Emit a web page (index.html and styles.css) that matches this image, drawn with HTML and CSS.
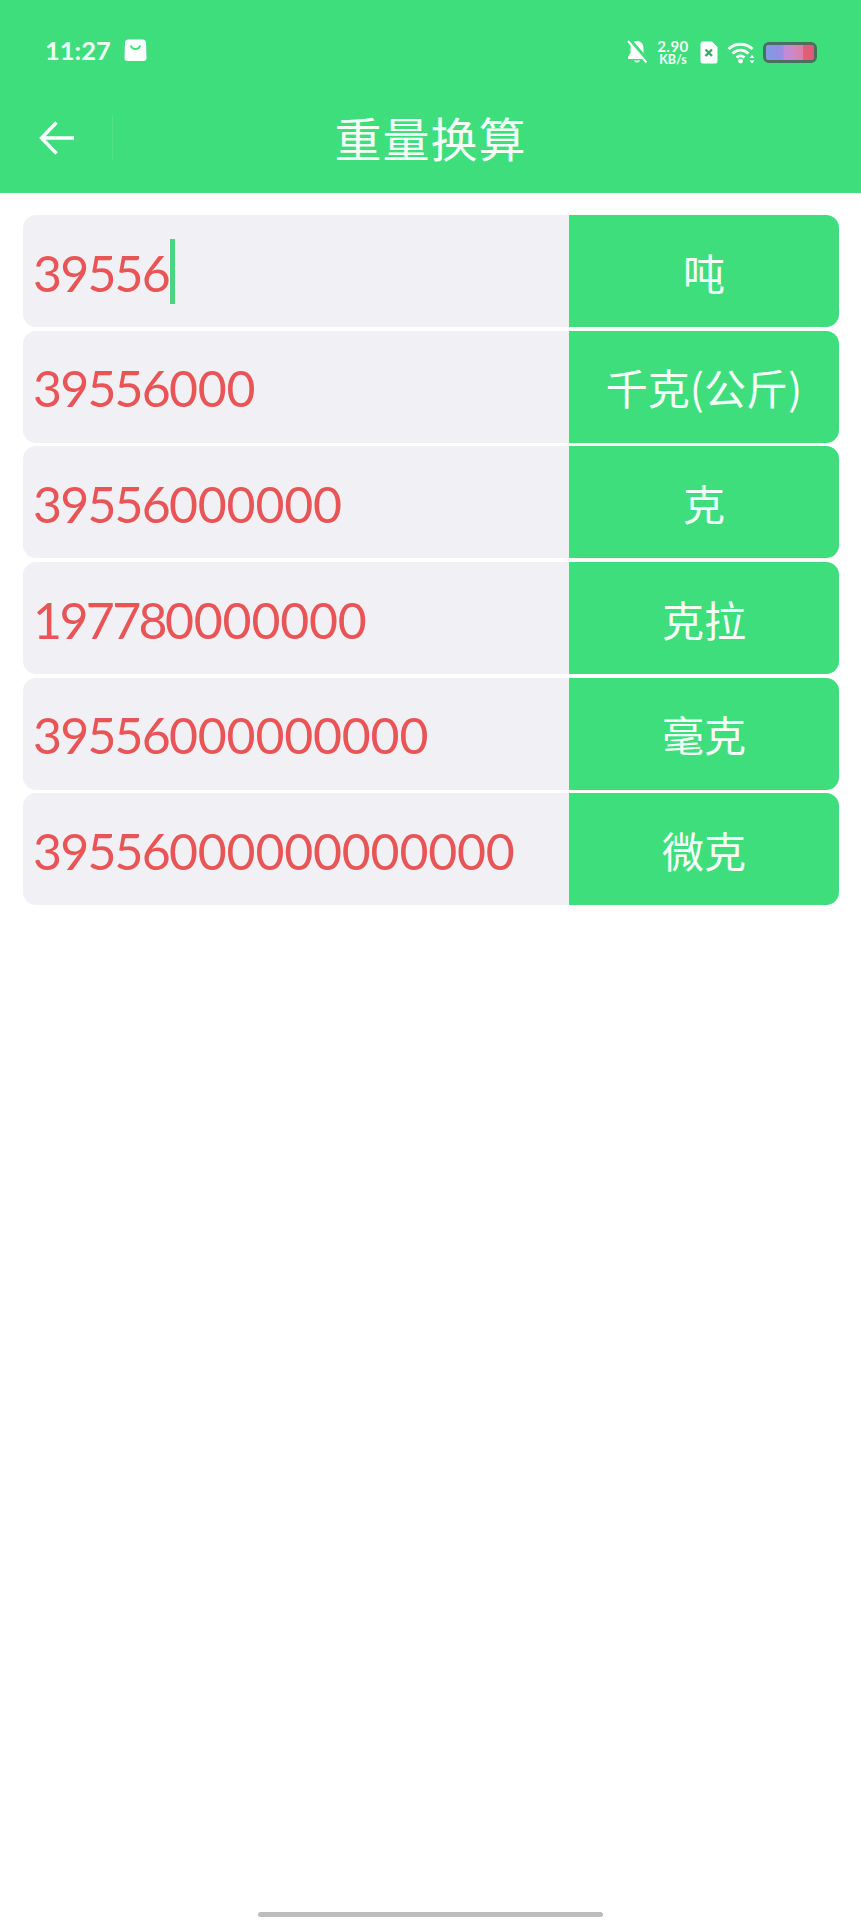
FILE: index.html
```html
<!DOCTYPE html>
<html lang="zh">
<head>
<meta charset="utf-8">
<title>重量换算</title>
<link rel="stylesheet" href="styles.css">
</head>
<body>
<header class="header">
  <div class="status">
    <div class="status-left">
      <span class="time">11:27</span>
      <svg class="bag" viewBox="0 0 23 23"><path d="M4 .5h15a3 3 0 0 1 3 2.500l.5 16a3 3 0 0 1-3 3h-16a3 3 0 0 1-3-3l.5-16a3 3 0 0 1 3-2.500z" fill="#fff"/><path d="M7 7c1 4 8 4 9 0" fill="none" stroke="#3fde7d" stroke-width="1.800" stroke-linecap="round"/></svg>
    </div>
    <div class="status-right">
      <svg class="bell" viewBox="0 0 22 24"><path d="M11 1c-4 0-6.500 3-6.500 7v5L2 17v2h18v-2L17.500 13V8c0-4-2.500-7-6.500-7z" fill="#fff"/><path d="M8 20.500c.5 2.500 5.500 2.500 6 0z" fill="#fff"/><path d="M3.500 0L22 21" stroke="#3fde7d" stroke-width="4"/><path d="M2 1L20.500 22.500" stroke="#fff" stroke-width="2"/></svg>
      <div class="speed"><span class="speed-num">2.90</span><span class="speed-unit">KB/s</span></div>
      <svg class="sim" viewBox="0 0 18 23"><path d="M3 .5h9L17.500 6v14a2.500 2.500 0 0 1-2.500 2.500H3A2.500 2.500 0 0 1 .5 20V3A2.500 2.500 0 0 1 3 .5z" fill="#fff"/><path d="M5.500 8.500l6.500 6.500M12 8.500L5.500 15" stroke="#3aa86a" stroke-width="2.400"/></svg>
      <svg class="wifi" viewBox="0 0 29 23"><path d="M1.500 8C8.500 1.500 18.500 1.500 25.500 8" fill="none" stroke="#fff" stroke-width="3"/><path d="M5.500 12.500C10.500 8 16.500 8 21.500 12.500" fill="none" stroke="#fff" stroke-width="3"/><path d="M9.500 16.500c3-2.500 5-2.500 8 0" fill="none" stroke="#fff" stroke-width="2.800"/><circle cx="13.500" cy="20" r="2.400" fill="#fff"/><path d="M25 14l2.500 3h-5zM25 22.500l2.500-3h-5z" fill="#fff"/></svg>
      <div class="battery"><div class="battery-fill"></div></div>
    </div>
  </div>
  <div class="toolbar">
    <div class="back">
      <svg class="arrow" viewBox="0 0 36 36"><path d="M35 18H3M17.500 2.500L2.500 18l15 15.500" fill="none" stroke="#fff" stroke-width="3.400"/></svg>
    </div>
    <h1 class="title">重量换算</h1>
  </div>
</header>

<main class="list">
  <div class="row">
    <div class="value"><span class="lead">39556</span><i class="caret"></i></div>
    <div class="unit">吨</div>
  </div>
  <div class="row">
    <div class="value"><span class="lead">39556</span><span>000</span></div>
    <div class="unit">千克(公斤)</div>
  </div>
  <div class="row">
    <div class="value"><span class="lead">39556</span><span>000000</span></div>
    <div class="unit">克</div>
  </div>
  <div class="row">
    <div class="value"><span class="lead lead-one">19778</span><span>0000000</span></div>
    <div class="unit">克拉</div>
  </div>
  <div class="row">
    <div class="value"><span class="lead">39556</span><span>000000000</span></div>
    <div class="unit">毫克</div>
  </div>
  <div class="row">
    <div class="value"><span class="lead">39556</span><span>000000000000</span></div>
    <div class="unit">微克</div>
  </div>
</main>

<div class="home-bar"></div>
</body>
</html>
```

FILE: styles.css
```css
* { box-sizing: border-box; }
html, body { margin: 0; padding: 0; }
body {
  width: 861px;
  height: 1920px;
  background: #fff;
  position: relative;
  overflow: hidden;
  font-family: "Noto Sans CJK SC", "Lato", sans-serif;
}
.header {
  height: 193px;
  background: #3fde7d;
  color: #fff;
  display: flex;
  flex-direction: column;
}
.status {
  height: 100px;
  padding: 38px 45px 0 45px;
  display: flex;
  justify-content: space-between;
  align-items: flex-start;
}
.status-left { display: flex; align-items: center; gap: 11px; height: 25px; }
.time {
  font-family: "Lato", sans-serif;
  width: 68px;
  font-size: 25.500px;
  font-weight: 700;
  line-height: 25px;
  color: #effff5;
}
.bag { width: 23px; height: 23px; display: block; }
.status-right { display: flex; align-items: center; height: 28px; }
.bell { width: 22px; height: 24px; display: block; margin-right: 6px; }
.speed { display: flex; flex-direction: column; align-items: center; gap: 0; width: 38px; margin-right: 8px; font-family: "Lato", sans-serif; font-weight: 700; color: #f2fff7; }
.speed-num { font-size: 15px; line-height: 14px; letter-spacing: 0.5px; }
.speed-unit { font-size: 12.500px; line-height: 13px; }
.sim { width: 18px; height: 23px; display: block; margin-right: 9px; }
.wifi { width: 29px; height: 23px; display: block; margin-right: 7px; }
.battery {
  width: 54px;
  height: 21px;
  border-radius: 6px;
  border: 3px solid #4a6f62;
  overflow: hidden;
  margin-right: -1px;
}
.battery-fill {
  height: 100%;
  background: linear-gradient(90deg, #7f9ce0 0%, #9a8ce6 36%, #c48ad4 37%, #c98acb 58%, #d585b8 59%, #d882ac 76%, #e0607e 77%, #e05a72 100%);
}
.toolbar {
  height: 93px;
  display: grid;
  grid-template-columns: 113px 1fr 113px;
  align-items: start;
}
.back {
  height: 43px;
  margin-top: 16px;
  padding-left: 39px;
  display: flex;
  align-items: center;
  border-right: 1px solid #53e28b;
}
.arrow { width: 36px; height: 36px; display: block; }
.title {
  grid-column: 2;
  margin: 7px 0 0;
  text-align: center;
  font-size: 47px;
  font-weight: 400;
  line-height: 60px;
  letter-spacing: 1px;
  color: #f4fff8;
}
.list {
  padding: 22px 22px 0 23px;
  display: flex;
  flex-direction: column;
  gap: 3.700px;
}
.row {
  height: 112px;
  display: flex;
  background: #f1f1f5;
  border-radius: 13px;
  overflow: hidden;
}
.value {
  width: 546px;
  padding-left: 10px;
  padding-top: 3px;
  display: flex;
  align-items: center;
  font-family: "Lato", sans-serif;
  font-size: 50px;
  font-weight: 400;
  letter-spacing: -0.200px;
  color: #e95556;
  line-height: 1;
}
.lead { letter-spacing: -1.800px; }
.lead-one { letter-spacing: -2.600px; }
.caret {
  display: block;
  width: 4.500px;
  height: 65px;
  margin: -3px 0 0 1px;
  background: #4cd57f;
}
.unit {
  flex: 1;
  background: #3fde7d;
  color: #f4fff8;
  display: flex;
  align-items: center;
  justify-content: center;
  font-size: 42px;
  font-weight: 400;
}
.home-bar {
  position: absolute;
  left: 258px;
  top: 1912px;
  width: 345px;
  height: 5px;
  border-radius: 3px;
  background: #bdbdbd;
}
```
